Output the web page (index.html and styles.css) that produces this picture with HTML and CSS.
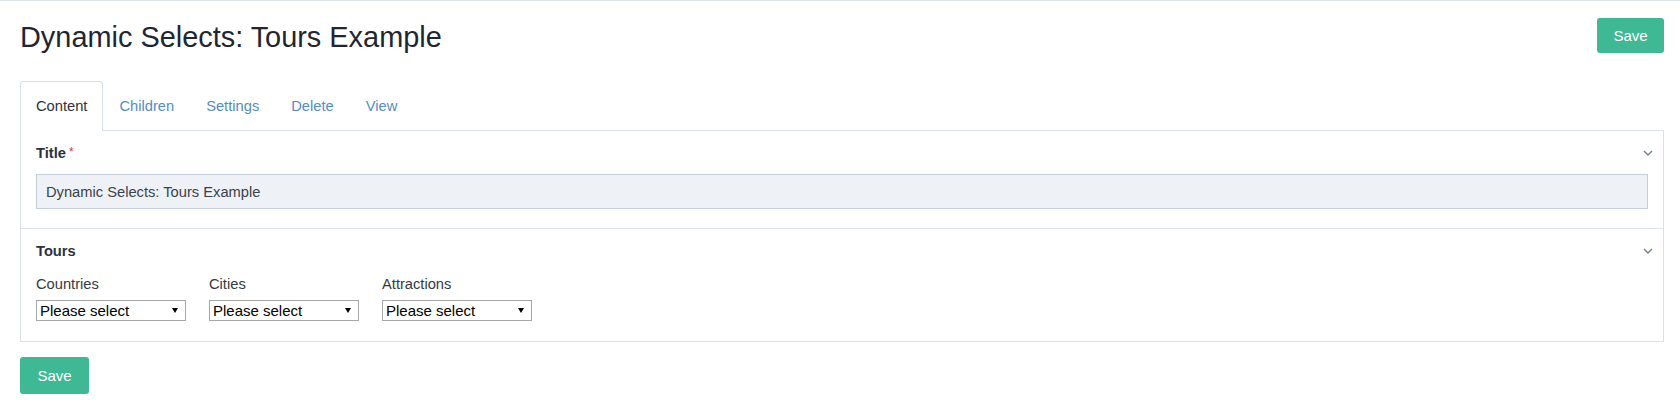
FILE: index.html
```html
<!DOCTYPE html>
<html lang="en">
<head>
    <meta charset="UTF-8">
    <title>Dynamic Selects: Tours Example</title>
    <link rel="stylesheet" href="styles.css">
</head>
<body>
    <div class="page">
        <div class="page-header">
            <h1>Dynamic Selects: Tours Example</h1>
            <button class="btn btn-top">Save</button>
        </div>

        <ul class="tabs">
            <li class="tab active">Content</li>
            <li class="tab">Children</li>
            <li class="tab">Settings</li>
            <li class="tab">Delete</li>
            <li class="tab">View</li>
        </ul>

        <div class="panel">
            <div class="section">
                <div class="section-head">
                    <label class="section-label" for="title">Title<span class="req">*</span></label>
                    <svg class="chevron" width="10" height="6" viewBox="0 0 10 6"><path d="M1 1 L5 5 L9 1" fill="none" stroke="#6f7f95" stroke-width="1.4"/></svg>
                </div>
                <input class="text-input" id="title" type="text" value="Dynamic Selects: Tours Example">
            </div>

            <div class="section">
                <div class="section-head">
                    <span class="section-label">Tours</span>
                    <svg class="chevron" width="10" height="6" viewBox="0 0 10 6"><path d="M1 1 L5 5 L9 1" fill="none" stroke="#6f7f95" stroke-width="1.4"/></svg>
                </div>
                <div class="select-row">
                    <div class="select-col">
                        <label class="field-label">Countries</label>
                        <div class="select-box">
                            <select><option>Please select</option></select>
                        </div>
                    </div>
                    <div class="select-col">
                        <label class="field-label">Cities</label>
                        <div class="select-box">
                            <select><option>Please select</option></select>
                        </div>
                    </div>
                    <div class="select-col">
                        <label class="field-label">Attractions</label>
                        <div class="select-box">
                            <select><option>Please select</option></select>
                        </div>
                    </div>
                </div>
            </div>
        </div>

        <button class="btn btn-bottom">Save</button>
    </div>
</body>
</html>
```

FILE: styles.css
```css
body {
    margin: 0;
    border-top: 1px solid #dbe3ec;
    font-family: "Liberation Sans", Arial, sans-serif;
    font-size: 14.7px;
    color: #333a44;
    background: #fff;
}

.page {
    padding: 17px 16px 20px 20px;
}

.page-header {
    display: flex;
    justify-content: space-between;
    align-items: flex-start;
}

h1 {
    margin: 0;
    padding-top: 2px;
    font-size: 28.9px;
    line-height: 35px;
    font-weight: normal;
    color: #1f2631;
}

.btn {
    background-color: #3fb994;
    color: #fff;
    border: none;
    border-radius: 3px;
    font-family: "Liberation Sans", Arial, sans-serif;
    font-size: 15px;
    cursor: pointer;
}

.btn-top {
    width: 67px;
    height: 35px;
}

.btn-bottom {
    width: 69px;
    height: 37px;
    margin-top: 15px;
}

/* tabs */
.tabs {
    display: flex;
    list-style: none;
    margin: 26px 0 0 0;
    padding: 0;
}

.tab {
    padding: 0 15px;
    line-height: 49px;
    border: 1px solid transparent;
    border-bottom: none;
    border-radius: 3px 3px 0 0;
    color: #548cc8;
    margin-bottom: -1px;
    position: relative;
}

.tab.active {
    background: #fff;
    color: #2c333d;
    border-color: #d6dee8;
}

/* panel */
.panel {
    border: 1px solid #d9e0e9;
}

.section {
    padding: 12px 15px 19px 15px;
}

.section + .section {
    border-top: 1px solid #dde3eb;
    padding-top: 12px;
    padding-bottom: 20px;
}

.section-head {
    display: flex;
    justify-content: space-between;
    align-items: center;
    height: 20px;
    line-height: 20px;
}

.section-label {
    font-weight: bold;
    color: #2a323d;
}

.req {
    position: relative;
    top: -2px;
    margin-left: 3px;
    color: #d0403c;
    font-weight: normal;
    font-size: 12px;
}

.chevron {
    margin-right: -5px;
}

.text-input {
    display: block;
    box-sizing: border-box;
    width: 100%;
    height: 35px;
    margin-top: 11px;
    padding: 0 9px;
    border: 1px solid #c5cfdb;
    background: #eef2f7;
    font-family: "Liberation Sans", Arial, sans-serif;
    font-size: 14.7px;
    color: #3a414b;
}

.select-row {
    display: flex;
    gap: 23px;
    margin-top: 13px;
}

.field-label {
    display: block;
    line-height: 20px;
    margin-bottom: 6px;
    color: #343a42;
}

.select-box {
    position: relative;
    width: 150px;
}

.select-box select {
    appearance: none;
    -webkit-appearance: none;
    box-sizing: border-box;
    width: 100%;
    height: 21px;
    padding: 0 16px 0 3px;
    border: 1px solid #a6a6a6;
    border-radius: 0;
    background: #fff;
    font-family: "Liberation Sans", Arial, sans-serif;
    font-size: 15px;
    color: #000;
}

.select-box::after {
    content: "";
    position: absolute;
    right: 8px;
    top: 8px;
    border-left: 3px solid transparent;
    border-right: 3px solid transparent;
    border-top: 5px solid #000;
    pointer-events: none;
}
```
